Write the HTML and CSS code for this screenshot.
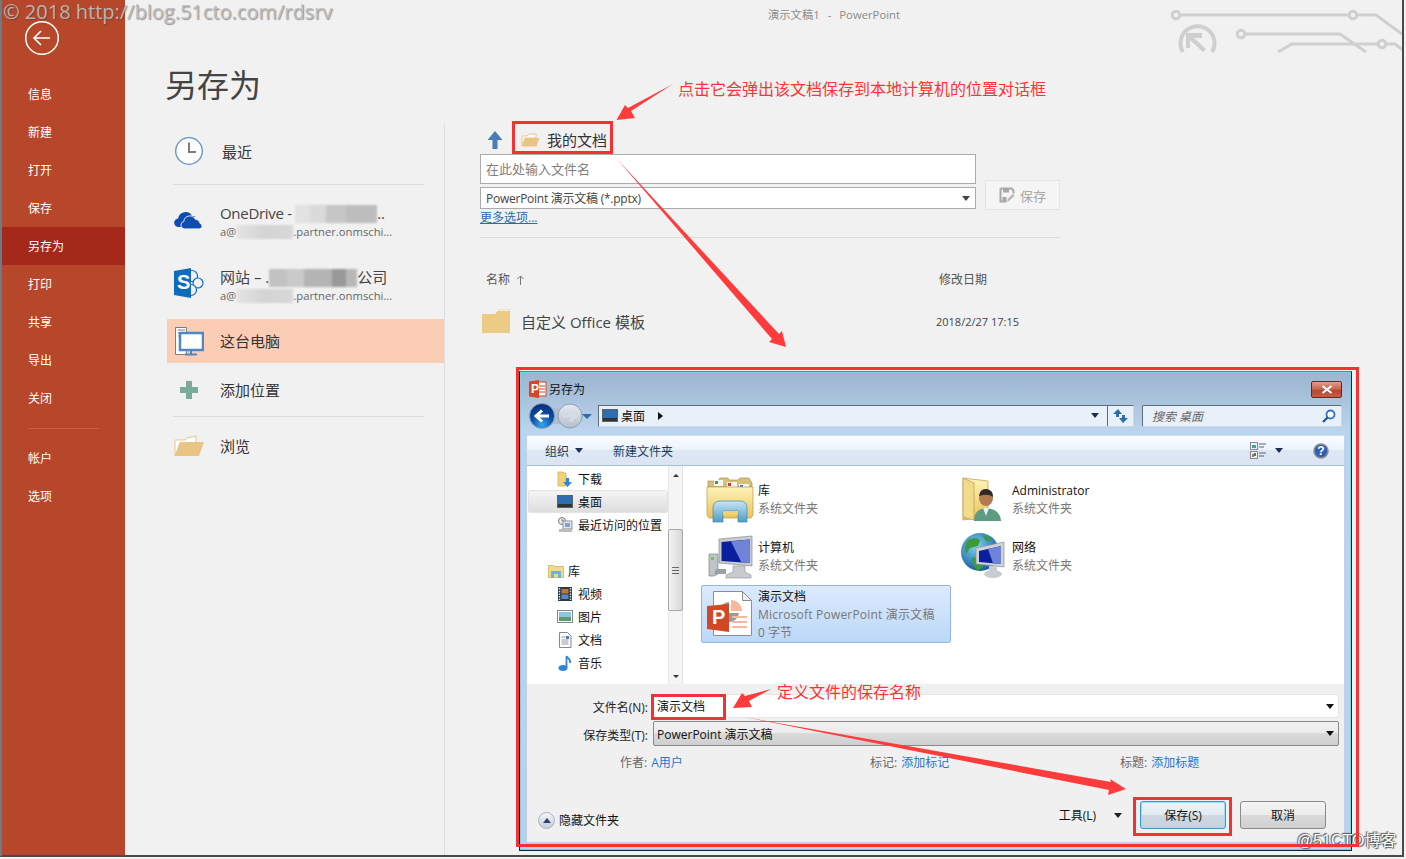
FILE: index.html
```html
<!DOCTYPE html>
<html lang="zh-CN">
<head>
<meta charset="utf-8">
<title>另存为</title>
<link rel="stylesheet" href="styles.css">
</head>
<body>
<div class="window">
  <aside class="sidebar">
    <div class="back-wrap">
      <svg class="back-icon" width="36" height="36" viewBox="0 0 36 36"><circle cx="18" cy="18" r="16.3" fill="none" stroke="#fff" stroke-width="1.5"/><path d="M26 18H10M17 11l-7 7 7 7" fill="none" stroke="#fff" stroke-width="1.6"/></svg>
    </div>
    <nav class="side-nav">
      <a class="side-item">信息</a>
      <a class="side-item">新建</a>
      <a class="side-item">打开</a>
      <a class="side-item">保存</a>
      <a class="side-item side-active">另存为</a>
      <a class="side-item">打印</a>
      <a class="side-item">共享</a>
      <a class="side-item">导出</a>
      <a class="side-item">关闭</a>
      <div class="side-sep"></div>
      <a class="side-item">帐户</a>
      <a class="side-item">选项</a>
    </nav>
  </aside>

  <main class="main">
    <div class="doc-title"><span>演示文稿1</span><span class="doc-dash">-</span><span>PowerPoint</span></div>
    <h1 class="heading">另存为</h1>
    <div class="panes">
      <section class="places">
        <div class="place place-recent">
          <span class="place-icon"><svg width="30" height="30" viewBox="0 0 30 30"><circle cx="15" cy="15" r="13.3" fill="#fff" stroke="#5b8fc9" stroke-width="1.3"/><path d="M15 6.5V16h7" fill="none" stroke="#7d7d7d" stroke-width="2"/></svg></span>
          <span class="place-name place-name-recent">最近</span>
        </div>
        <div class="place-sep"></div>
        <div class="place place-tall">
          <span class="place-icon"><svg class="icon-cloud" width="30" height="21" viewBox="0 0 32 22"><path d="M5 19a4.5 4.5 0 0 1-.6-9 8 8 0 0 1 15-2.600A6 6 0 0 1 23 7.500L12 12.500 8 19z" fill="#0f4cb0"/><path d="M11 21a4 4 0 0 1-.5-7.900 6.500 6.500 0 0 1 12.300-2.300 5 5 0 0 1 4.900 4.300A3 3 0 0 1 27 21z" fill="#0f4cb0" stroke="#f1f1f1" stroke-width="1"/></svg></span>
          <div class="place-lines">
            <div class="place-title place-title-latin">OneDrive - <span class="redact redact-od"></span>..</div>
            <div class="place-sub">a@<span class="redact redact-mail"></span>.partner.onmschi...</div>
          </div>
        </div>
        <div class="place place-tall">
          <span class="place-icon"><svg class="icon-site" width="32" height="32" viewBox="0 0 32 32"><circle cx="19" cy="9" r="5.500" fill="#f1f1f1" stroke="#0f6cbd" stroke-width="1.200"/><circle cx="25" cy="16" r="5" fill="#f1f1f1" stroke="#0f6cbd" stroke-width="1.200"/><circle cx="18" cy="23" r="5.500" fill="#f1f1f1" stroke="#0f6cbd" stroke-width="1.200"/><path d="M1 4 18 1v30L1 28z" fill="#0f6cbd"/><text class="svg-s" x="4" y="22">S</text></svg></span>
          <div class="place-lines">
            <div class="place-title">网站 – .<span class="redact redact-site"></span>公司</div>
            <div class="place-sub">a@<span class="redact redact-mail"></span>.partner.onmschi...</div>
          </div>
        </div>
        <div class="place place-active place-up">
          <span class="place-icon"><svg width="30" height="30" viewBox="0 0 30 30"><path d="M1.500 1.500h11v27h-11z" fill="#fff" stroke="#7d7d7d"/><path d="M4 4h7M4 7h7M4 10h7" stroke="#7d7d7d"/><rect x="6" y="7" width="23" height="17" fill="#fff" stroke="#4f86c6" stroke-width="2.500"/><path d="M17 25v3M11 28.500h12" stroke="#4f86c6" stroke-width="2"/></svg></span>
          <span class="place-name">这台电脑</span>
        </div>
        <div class="place place-add place-up">
          <span class="place-icon"><svg width="20" height="20" viewBox="0 0 20 20"><path d="M7 1h6v6h6v6h-6v6H7v-6H1V7h6z" fill="#7aaa98"/></svg></span>
          <span class="place-name">添加位置</span>
        </div>
        <div class="place-sep place-sep-low"></div>
        <div class="place place-browse place-up">
          <span class="place-icon"><svg width="30" height="22" viewBox="0 0 30 22"><path d="M1 21V5h10l2-2 9-2v7H6z" fill="#fff" stroke="#e9c585"/><path d="M1 21 6 7h24l-5 14z" fill="#e9c585"/></svg></span>
          <span class="place-name">浏览</span>
        </div>
      </section>

      <section class="saver">
        <div class="crumb">
          <svg class="crumb-up" width="16" height="20" viewBox="0 0 16 20"><path d="M8 1 15.500 10H10.500v9H5.500v-9H.5z" fill="#4a7db5"/></svg>
          <svg class="crumb-folder" width="19" height="14" viewBox="0 0 19 14"><path d="M1 13V3h5l2-2h7v4H4z" fill="#fff" stroke="#e9c585"/><path d="M1 13.500 4 5h14.500l-3 8.500z" fill="#e9c585"/></svg>
          <span class="crumb-text">我的文档</span>
        </div>
        <div class="save-form">
          <div class="field-name">在此处输入文件名</div>
          <div class="field-type"><span class="field-type-text">PowerPoint 演示文稿 (*.pptx)</span><i class="caret caret-gray"></i></div>
          <div class="save-btn">
            <svg width="16" height="16" viewBox="0 0 16 16"><path d="M1.500 1.500h11l2 2v3M1.500 1.500v13h6" fill="none" stroke="#a8a8a8" stroke-width="2"/><rect x="4" y="2" width="6" height="3.500" fill="#a8a8a8"/><rect x="3.500" y="10" width="4" height="4.500" fill="#a8a8a8"/><path d="M8 15l1-3.500 5-4.500 1.500 2-5 4.500z" fill="#b8b8b8"/></svg>
            <span>保存</span>
          </div>
          <a class="more-link">更多选项...</a>
        </div>
        <div class="saver-sep"></div>
        <div class="list-head">
          <span class="col-name">名称<svg class="sort-up" width="7" height="10" viewBox="0 0 7 10"><path d="M3.500 10V1M.5 4l3-3 3 3" fill="none" stroke="#777"/></svg></span>
          <span class="col-date">修改日期</span>
        </div>
        <div class="list-row">
          <span class="file-name"><svg width="28" height="24" viewBox="0 0 28 24"><path d="M14 4l4-3h9v4z" fill="#fff" stroke="#eccb84" stroke-width=".7"/><path d="M0 5h13l3-3h12v22H0z" fill="#eccb84"/></svg>自定义 Office 模板</span>
          <span class="file-date">2018/2/27 17:15</span>
        </div>
      </section>
    </div>
    <svg class="circuit" width="236" height="54" viewBox="0 0 236 54">
      <g fill="none" stroke="#cfcfcf" stroke-width="3">
        <circle cx="10" cy="15" r="3.800"/><path d="M14 15H183M191 15h19l26 19"/><circle cx="187" cy="15" r="3.800"/>
        <circle cx="75" cy="34" r="3.800"/><path d="M79 34h95l26 18"/>
        <path d="M112 52l14-8H212M220 44h9l8 6"/><circle cx="216" cy="44" r="3.800"/>
        <path d="M17 52A17 17 0 1 1 46 52" stroke-width="4"/>
      </g>
      <path d="M20 33h16v5h-8l12 11-3 3-13-12v8h-4z" fill="#cfcfcf"/>
    </svg>
  </main>
</div>

<section class="dialog">
  <header class="dlg-title">
    <svg class="dlg-app" width="18" height="18" viewBox="0 0 18 18"><rect x="8" y="2" width="9" height="14" fill="#fff" stroke="#d24726"/><path d="M10 6h6M10 9h6M10 12h6" stroke="#d24726"/><path d="M0 1.500 10 0v18L0 16.500z" fill="#d24726"/><text class="svg-p" x="2" y="13">P</text></svg>
    <span class="dlg-title-text">另存为</span>
    <span class="dlg-close"><svg width="12" height="9" viewBox="0 0 12 9"><path d="M1.500 1l9 7M10.500 1l-9 7" stroke="#fff" stroke-width="2.200"/></svg></span>
  </header>
  <div class="dlg-nav">
    <svg class="nav-arrows" width="68" height="28" viewBox="0 0 68 28">
      <defs>
        <radialGradient id="backBlue" cx=".5" cy=".85" r=".8"><stop offset="0" stop-color="#35a7f0"/><stop offset=".55" stop-color="#0c4fa6"/><stop offset="1" stop-color="#0a2e78"/></radialGradient>
        <linearGradient id="fwdGray" x1="0" y1="0" x2="0" y2="1"><stop offset="0" stop-color="#e6ebf2"/><stop offset="1" stop-color="#b4bfcc"/></linearGradient>
      </defs>
      <rect x="14" y="6" width="40" height="16" rx="8" fill="#a9bdd3"/>
      <circle cx="13" cy="14" r="12.500" fill="url(#backBlue)" stroke="#8aa2bd"/>
      <path d="M20 14H8M13 8.500 7 14l6 5.500" fill="none" stroke="#fff" stroke-width="3"/>
      <circle cx="41" cy="14" r="12" fill="url(#fwdGray)" stroke="#8fa0b3"/>
      <path d="M34 14h12M41 9l5.500 5-5.500 5" fill="none" stroke="#d5dce4" stroke-width="3"/>
      <path d="M53 12h10l-5 5z" fill="#2d6fae"/>
    </svg>
    <div class="crumbbar">
      <svg width="16" height="13" viewBox="0 0 16 13"><rect x=".5" y=".5" width="15" height="12" fill="#2f6db3" stroke="#566"/><rect x="1" y="9" width="14" height="3" fill="#333"/></svg>
      <span class="crumbbar-text">桌面</span>
      <i class="caret-right"></i>
      <i class="caret caret-navy caret-push"></i>
      <span class="refresh"><svg width="15" height="14" viewBox="0 0 15 14"><path d="M5 0 0 5h3v3h3V5h3z" fill="#2d6fae"/><path d="M10 14l5-5h-3V6H9v3H6z" fill="#2d6fae"/></svg></span>
    </div>
    <div class="searchbar">
      <span>搜索 桌面</span>
      <svg width="14" height="14" viewBox="0 0 14 14"><circle cx="8.500" cy="5.500" r="4" fill="#fff" stroke="#2d74c4" stroke-width="1.800"/><path d="M5.500 8.500 1 13" stroke="#1d4f94" stroke-width="2.200"/></svg>
    </div>
  </div>
  <div class="dlg-toolbar">
    <span class="tool">组织<i class="caret caret-navy"></i></span>
    <span class="tool tool-new">新建文件夹</span>
    <svg class="tool-view" width="17" height="17" viewBox="0 0 17 17"><rect x=".5" y=".5" width="7" height="7" fill="#eef" stroke="#889"/><rect x=".5" y="9.500" width="7" height="7" fill="#eef" stroke="#889"/><rect x="2" y="3" width="4" height="3" fill="#3a8"/><rect x="2" y="12" width="2" height="3" fill="#c63"/><rect x="4" y="11" width="2" height="3" fill="#483"/><path d="M9 2h7M9 5h5M9 11h7M9 14h5" stroke="#566"/></svg>
    <i class="caret caret-navy caret-view"></i>
    <svg class="tool-help" width="16" height="16" viewBox="0 0 16 16"><circle cx="8" cy="8" r="7" fill="#2f5fb5" stroke="#8a8f98" stroke-width="1.500"/><text class="svg-help" x="8" y="12">?</text></svg>
  </div>
  <div class="dlg-main">
    <div class="tree">
      <div class="tree-item"><svg width="16" height="16" viewBox="0 0 16 16"><path d="M1 1h5l1 1h2v13H1z" fill="#f1d27a" stroke="#c9a94f" stroke-width=".7"/><path d="M9 7h3v4h3l-4.500 5L6 11h3z" fill="#2f86d8"/></svg>下载</div>
      <div class="tree-item tree-current"><svg width="16" height="13" viewBox="0 0 16 13"><rect x=".5" y=".5" width="15" height="12" fill="#2f6db3" stroke="#566"/><rect x="1" y="9" width="14" height="3" fill="#333"/></svg>桌面</div>
      <div class="tree-item"><svg width="16" height="16" viewBox="0 0 16 16"><circle cx="5" cy="4" r="3.500" fill="#eee" stroke="#777"/><path d="M5 2v2h2" fill="none" stroke="#555" stroke-width=".7"/><rect x="6" y="4" width="9" height="8" fill="#dfe6ee" stroke="#8a8f98"/><rect x="8" y="6" width="5" height="4" fill="#7aa5cf"/><rect x="2" y="12" width="13" height="3" fill="#bbb"/></svg>最近访问的位置</div>
      <div class="tree-item tree-lib"><svg width="16" height="14" viewBox="0 0 16 14"><path d="M.5 1.500h5l1 1h9v11H.5z" fill="#f3d98a" stroke="#c9a94f" stroke-width=".7"/><path d="M3 14V7h10v7h-3v-4H6v4z" fill="#6fb2d6"/></svg>库</div>
      <div class="tree-item"><svg width="16" height="16" viewBox="0 0 16 16"><rect x="1" y="1" width="14" height="14" fill="#2b3b46"/><rect x="4.500" y="3" width="7" height="4.500" fill="#c0763d"/><rect x="4.500" y="8.500" width="7" height="4.500" fill="#5b8ab8"/><path d="M2.500 2v12M13.500 2v12" stroke="#dfe6ee" stroke-width="1.300" stroke-dasharray="1.500 1.200"/></svg>视频</div>
      <div class="tree-item"><svg width="16" height="13" viewBox="0 0 16 13"><rect x=".5" y=".5" width="15" height="12" fill="#fff" stroke="#808890"/><rect x="2" y="2" width="12" height="5" fill="#8fc4e2"/><rect x="2" y="7" width="12" height="4" fill="#5e9b6b"/></svg>图片</div>
      <div class="tree-item"><svg width="14" height="16" viewBox="0 0 14 16"><path d="M1.500.5h8l3.500 3.500v11.500H1.500z" fill="#fff" stroke="#808890"/><path d="M3.500 5h4M3.500 8h7M3.500 10h7M3.500 12h7" stroke="#8c9aaa"/><rect x="8" y="4" width="3" height="3" fill="#4a7db5"/></svg>文档</div>
      <div class="tree-item"><svg width="14" height="16" viewBox="0 0 14 16"><ellipse cx="5" cy="13" rx="4.500" ry="3" fill="#2f86d8"/><path d="M8.500 13V1c1 2.500 4.500 3 3.500 7" fill="none" stroke="#2f86d8" stroke-width="1.800"/></svg>音乐</div>
    </div>
    <div class="scroll">
      <i class="scroll-up"></i>
      <div class="scroll-thumb"><span class="scroll-grip"></span></div>
      <i class="scroll-down"></i>
    </div>
    <div class="files">
      <div class="file">
        <svg class="file-icon" width="48" height="48" viewBox="0 0 48 48">
          <defs><linearGradient id="yellowFolder" x1="0" y1="0" x2="0" y2="1"><stop offset="0" stop-color="#fff3b8"/><stop offset="1" stop-color="#e9c45a"/></linearGradient>
          <linearGradient id="libBlue" x1="0" y1="0" x2="0" y2="1"><stop offset="0" stop-color="#c8e6f4"/><stop offset="1" stop-color="#4f9cc4"/></linearGradient></defs>
          <path d="M2 6h10l2-3h8l1 2h9l2-2h9l3 5v4H2z" fill="#d9c07a" stroke="#a99350" stroke-width=".7"/>
          <rect x="8" y="5" width="9" height="6" fill="#f4f4f0"/><rect x="9" y="6" width="3" height="3" fill="#3ca34a"/><rect x="21" y="7" width="10" height="6" fill="#f4f4f0"/><rect x="22" y="8" width="3" height="3" fill="#c8452c"/><rect x="33" y="9" width="10" height="5" fill="#f4f4f0"/><rect x="34" y="10" width="3" height="3" fill="#2f86d8"/>
          <path d="M1 12h46v28l-2 3H3l-2-3z" fill="url(#yellowFolder)" stroke="#b99a46" stroke-width=".7"/>
          <path d="M7 47V33q0-7 7-7h20q7 0 7 7v14h-9V36H17v11z" fill="url(#libBlue)" stroke="#3d86ad" stroke-width=".7"/>
          <rect x="17" y="36" width="15" height="4" fill="#f0d26f"/>
        </svg>
        <div class="file-text"><div class="file-title">库</div><div class="file-sub">系统文件夹</div></div>
      </div>
      <div class="file">
        <svg class="file-icon" width="48" height="48" viewBox="0 0 48 48">
          <path d="M3 22h9v20l-4 2H3z" fill="#bfc4c8" stroke="#7f8589" stroke-width=".7"/><rect x="5" y="25" width="3" height="3" fill="#7ac143"/>
          <path d="M13 7 46 4v30l-33-3z" fill="#c8ccd0" stroke="#868b90" stroke-width=".7"/>
          <path d="M15.500 10 43.500 7.500v23.500l-28-2z" fill="#0a1f9e"/>
          <path d="M25 9.500 43.500 7.500v23.500l-8-.6z" fill="#6f83d8"/>
          <path d="M27 34h12v6l6 3v3H20v-3l7-3z" fill="#c7cbce" stroke="#9a9fa3" stroke-width=".7"/>
          <path d="M10 37h10v5H8z" fill="#9aa0a4"/>
        </svg>
        <div class="file-text"><div class="file-title">计算机</div><div class="file-sub">系统文件夹</div></div>
      </div>
      <div class="file file-selected">
        <svg class="file-icon file-icon-ppt" width="48" height="48" viewBox="0 0 48 48">
          <path d="M7.500 1.500h29l9 9v35h-38z" fill="#fff" stroke="#8e8e8e"/>
          <path d="M36.500 1.500v9h9z" fill="#eee" stroke="#8e8e8e"/>
          <path d="M25 10a11 11 0 0 1 11 11H25z" fill="#f6b9a0"/>
          <path d="M23 12a10 10 0 1 0 10 11H23z" fill="#9a9a9a"/>
          <path d="M26 27h15M26 32h15M26 37h15" stroke="#f6b9a0" stroke-width="2.200"/>
          <path d="M1 16 23 14v28L1 39z" fill="#d24726"/>
          <text class="svg-ppt" x="6" y="34">P</text>
        </svg>
        <div class="file-text"><div class="file-title">演示文档</div><div class="file-sub file-sub-wide">Microsoft PowerPoint 演示文稿</div><div class="file-sub">0 字节</div></div>
      </div>
      <div class="file file-col2 file-row1">
        <svg class="file-icon" width="48" height="48" viewBox="0 0 48 48">
          <path d="M3 3 28 6v36L3 45z" fill="url(#yellowFolder)" stroke="#b99a46" stroke-width=".7"/>
          <path d="M3 3l11 5v37l-11-3z" fill="#f3db8c" stroke="#b99a46" stroke-width=".7"/>
          <ellipse cx="26" cy="23" rx="7" ry="8" fill="#b47a50"/>
          <path d="M19 21q1-8 8-7 6 1 6 8-5-4-14-1z" fill="#2d2a28"/>
          <path d="M14 46q0-12 12-13 14 1 15 13z" fill="#5d9c82"/>
          <path d="M23 33h6l-3 8z" fill="#e8f2ec"/>
        </svg>
        <div class="file-text"><div class="file-title">Administrator</div><div class="file-sub">系统文件夹</div></div>
      </div>
      <div class="file file-col2 file-row2">
        <svg class="file-icon" width="48" height="48" viewBox="0 0 48 48">
          <defs><radialGradient id="globe" cx=".4" cy=".35" r=".7"><stop offset="0" stop-color="#7fd3ee"/><stop offset="1" stop-color="#10589c"/></radialGradient></defs>
          <circle cx="20" cy="20" r="19" fill="url(#globe)"/>
          <path d="M8 8q8-4 12 0l-2 6-8 2-4 6q-3-8 2-14zM12 25l8 2 3 8-5 4q-6-5-6-14zM22 3l10 3-5 4z" fill="#3a9a3c"/>
          <path d="M16 16 44 10v25l-28-3z" fill="#cfd3d6" stroke="#8a8f93" stroke-width=".7"/>
          <path d="M19 19 41 14v18l-22-2z" fill="#0a1f9e"/>
          <path d="M28 17 41 14v18l-8-.7z" fill="#6f83d8"/>
          <ellipse cx="33" cy="42" rx="9" ry="4" fill="#c9cdd0"/><rect x="29" y="34" width="8" height="6" fill="#c9cdd0"/>
        </svg>
        <div class="file-text"><div class="file-title">网络</div><div class="file-sub">系统文件夹</div></div>
      </div>
    </div>
  </div>
  <div class="dlg-footer">
    <div class="form-row">
      <label class="form-label">文件名(N):</label>
      <div class="combo combo-name"><span>演示文档</span><i class="caret caret-black"></i></div>
    </div>
    <div class="form-row form-row-type">
      <label class="form-label">保存类型(T):</label>
      <div class="combo combo-type"><span>PowerPoint 演示文稿</span><i class="caret caret-black"></i></div>
    </div>
    <div class="meta">
      <span class="meta-cell"><span class="meta-key">作者:</span><a class="meta-val">A用户</a></span>
      <span class="meta-cell"><span class="meta-key">标记:</span><a class="meta-val">添加标记</a></span>
      <span class="meta-cell"><span class="meta-key">标题:</span><a class="meta-val">添加标题</a></span>
    </div>
    <div class="actions">
      <span class="hide-folders"><i class="hide-circle"><i class="hide-tri"></i></i>隐藏文件夹</span>
      <span class="tools-label">工具(L)</span>
      <i class="caret caret-dark tools-caret"></i>
      <button class="btn btn-primary">保存(S)</button>
      <button class="btn">取消</button>
    </div>
  </div>
</section>

<div class="wm-top">© 2018 http://blog.51cto.com/rdsrv</div>
<div class="wm-bottom">@51CTO博客</div>
<div class="note note-top">点击它会弹出该文档保存到本地计算机的位置对话框</div>
<div class="note note-name">定义文件的保存名称</div>
<div class="mark mark-crumb"></div>
<div class="mark mark-dialog"></div>
<div class="mark mark-name"></div>
<div class="mark mark-save"></div>
<svg class="arrows" width="1406" height="859" viewBox="0 0 1406 859">
  <polygon points="673,84 631,111 635,118 616.500,120 625,105 628,108"/>
  <polygon points="617,159 779,334 782,331 786,347 769,342 772,339"/>
  <polygon points="771,689 749,701 752,707 733,708 742,693 745,696"/>
  <polygon points="744,717 1111,782 1110,779 1126,789 1108,795 1109,790"/>
</svg>
</body>
</html>
```
FILE: styles.css
```css
* { box-sizing: border-box; }
html, body { margin: 0; padding: 0; }
body {
  width: 1406px;
  height: 859px;
  position: relative;
  overflow: hidden;
  background: #f3f3f3;
  font-family: "Open Sans", "Noto Sans CJK SC", sans-serif;
  font-size: 12px;
  color: #333;
}
svg { display: block; flex: none; }
i { display: block; font-style: normal; }
a { color: inherit; }

.window {
  width: 1404px;
  height: 857px;
  display: flex;
  background: #f1f1f1;
  border-left: 2px solid #6e7b87;
  border-right: 2px solid #4a4a4a;
  border-bottom: 2px solid #4a4a4a;
}

/* sidebar */
.sidebar { width: 123px; flex: none; background: #b7472a; color: #fff; }
.back-wrap { height: 75px; padding: 20px 0 0 22px; }
.side-nav { display: flex; flex-direction: column; }
.side-item { height: 38px; line-height: 40px; padding-left: 26px; font-size: 12px; color: #fff; }
.side-active { background: #a4291a; }
.side-sep { width: 71px; height: 1px; margin: 11px 0 10px 26px; background: #d8573a; flex: none; }

/* main */
.main { flex: 1; min-width: 0; position: relative; }
.doc-title { height: 30px; line-height: 30px; padding-left: 643px; font-size: 11.300px; color: #8a8a8a; display: flex; }
.doc-dash { margin: 0 8px; }
.heading { margin: 33px 0 0 40px; height: 44px; line-height: 44px; font-size: 32px; font-weight: 400; color: #444; }
.panes { margin: 17px 0 0 42px; display: flex; height: 731px; }
.circuit { position: absolute; top: 0; right: 0; }

/* places */
.places { width: 278px; flex: none; border-right: 1px solid #dedede; }
.place { display: flex; align-items: center; gap: 9px; font-size: 15px; color: #333; }
.place-icon { width: 44px; flex: none; display: flex; justify-content: center; }
.icon-cloud { margin-top: -5px; }
.icon-site { margin-top: -6px; }
.place-recent { height: 54px; }
.place-name-recent { margin-left: 2px; }
.place-up .place-name { margin-top: -2px; }
.place-sep { height: 1px; margin: 6px 20px 0 6px; background: #dcdcdc; }
.place-tall { height: 64px; }
.place-sep + .place-tall { margin-top: 5px; }
.place-active { height: 44px; margin-top: 1px; background: #fccdb5; }
.place-add { height: 44px; margin-top: 5px; }
.place-sep-low { margin-top: 4px; }
.place-browse { height: 44px; margin-top: 7px; }
.place-lines { min-width: 0; white-space: nowrap; }
.place-title { font-size: 15px; line-height: 18px; color: #444; }
.place-title-latin { letter-spacing: -.3px; }
.place-sub { font-size: 11.250px; line-height: 18px; color: #666; }
.redact { display: inline-block; height: 18px; vertical-align: -4px; filter: blur(1px); }
.redact-od { width: 82px; background: linear-gradient(90deg, #e2e2e2 0 18%, #dadada 18% 38%, #c6c6c6 38% 62%, #bdbdbd 62% 100%); }
.redact-mail { width: 57px; height: 14px; vertical-align: -3px; background: linear-gradient(90deg, #e4e4e4, #d4d4d4 50%, #d8d8d8); }
.redact-site { width: 88px; background: linear-gradient(90deg, #c2c2c2 0 20%, #cacaca 20% 40%, #b4b4b4 40% 72%, #999 72% 88%, #b8b8b8 88% 100%); }
.svg-s { font: 700 20px "Liberation Sans", sans-serif; fill: #fff; }
.svg-p { font: 700 12px "Liberation Sans", sans-serif; fill: #fff; }
.svg-ppt { font: 700 20px "Liberation Sans", sans-serif; fill: #fff; }
.svg-help { font: 700 12px "Liberation Sans", sans-serif; fill: #fff; text-anchor: middle; }

/* saver */
.saver { width: 580px; flex: none; margin-left: 35px; }
.crumb { height: 30px; padding: 1px 0 0 7px; display: flex; align-items: center; }
.crumb-folder { margin-left: 18px; }
.crumb-text { margin-left: 7px; font-size: 15px; color: #333; }
.save-form { display: grid; grid-template-columns: 496px 75px; column-gap: 9px; row-gap: 3px; grid-template-rows: 30px 22px; }
.field-name { height: 30px; line-height: 28px; padding-left: 5px; background: #fff; border: 1px solid #ababab; color: #808080; font-size: 13px; }
.field-type { height: 22px; padding: 0 5px; display: flex; align-items: center; justify-content: space-between; background: #fff; border: 1px solid #ababab; color: #444; font-size: 12px; }
.field-type-text { letter-spacing: -.25px; }
.save-btn { grid-column: 2; grid-row: 1 / 3; align-self: end; height: 30px; margin-bottom: -1px; display: flex; align-items: center; justify-content: center; gap: 5px; background: #f5f5f5; border: 1px solid #e4e4e4; color: #a8a8a8; font-size: 13px; }
.more-link { grid-column: 1; height: 14px; line-height: 14px; margin-top: -1px; color: #2a6ab0; text-decoration: underline; font-size: 12px; }
.saver-sep { height: 1px; margin-top: 12px; background: #dcdcdc; }
.list-head { margin-top: 32px; height: 20px; line-height: 20px; display: grid; grid-template-columns: 459px 1fr; color: #555; font-size: 12px; }
.col-name { padding-left: 6px; display: flex; align-items: center; gap: 7px; }
.list-row { margin-top: 19px; height: 24px; display: grid; grid-template-columns: 456px 1fr; align-items: center; }
.file-name { display: flex; align-items: center; gap: 11px; padding-left: 2px; font-size: 15px; color: #444; }
.file-date { font-size: 11px; color: #444; }

/* carets */
.caret { width: 0; height: 0; border-left: 4px solid transparent; border-right: 4px solid transparent; border-top: 5px solid #333; flex: none; }
.caret-gray { border-top-color: #444; }
.caret-navy { border-top-color: #1e2f55; }
.caret-black { border-top-color: #111; }
.caret-dark { border-top-color: #222; }
.caret-right { width: 0; height: 0; border-top: 4px solid transparent; border-bottom: 4px solid transparent; border-left: 5px solid #111; margin-left: 13px; flex: none; }

/* dialog window */
.dialog {
  position: absolute;
  left: 519px;
  top: 371px;
  width: 833px;
  height: 480px;
  display: flex;
  flex-direction: column;
  padding: 0 7px;
  border: 1px solid #14212e;
  border-top-color: #6b8196;
  box-shadow: inset 0 0 0 1px #7cd0e8;
  background: linear-gradient(180deg, #9bb4cf 0, #bbd3ec 58px, #b9d1ea 100%);
  color: #111;
}
.dlg-title { height: 33px; flex: none; display: flex; align-items: flex-start; padding: 8px 0 0 2px; }
.dlg-title-text { margin-left: 2px; line-height: 20px; font-size: 12px; }
.dlg-close { margin: 1px 2px 0 auto; width: 31px; height: 17px; display: flex; align-items: center; justify-content: center; border: 1px solid #5e2a26; border-radius: 2px; background: linear-gradient(180deg, #e0a08c 0, #c85d46 50%, #b8452f 55%, #c65c45 100%); }

.dlg-nav { height: 21px; flex: none; display: flex; align-items: center; padding-left: 2px; }
.nav-arrows { margin-right: 1px; }
.crumbbar { width: 536px; height: 22px; display: flex; align-items: center; padding-left: 3px; background: #e8f0f9; border: 1px solid #5e6b78; border-bottom-color: #c9d7e6; border-right-color: #c9d7e6; }
.crumbbar-text { margin-left: 3px; font-size: 12px; }
.caret-push { margin-left: auto; margin-right: 8px; }
.refresh { width: 26px; height: 20px; display: flex; align-items: center; justify-content: center; border-left: 1px solid #5e6b78; }
.searchbar { width: 200px; height: 22px; margin-left: 8px; display: flex; align-items: center; justify-content: space-between; padding: 0 5px 0 9px; background: #e8f0f9; border: 1px solid #5e6b78; border-bottom-color: #c9d7e6; border-right-color: #c9d7e6; border-radius: 2px; color: #666; font-style: italic; font-size: 12px; }

.dlg-toolbar { height: 31px; margin-top: 9px; flex: none; display: flex; align-items: center; padding-left: 18px; border-top: 1px solid #d3e0ee; border-bottom: 1px solid #a9bdd3; background: linear-gradient(180deg, #fbfdff 0, #eaf2fb 48%, #dde7f4 50%, #dbe5f3 100%); color: #1e3c5a; font-size: 12px; }
.tool { display: flex; align-items: center; gap: 6px; }
.tool-new { margin-left: 30px; }
.tool-view { margin-left: auto; }
.caret-view { margin-left: 8px; }
.tool-help { margin: 0 15px 0 30px; }

.dlg-main { height: 218px; flex: none; display: grid; grid-template-columns: 141px 15px 1fr; background: #fff; }
.tree { padding-top: 1px; }
.tree-item { height: 23px; display: flex; align-items: center; gap: 5px; padding-left: 30px; font-size: 12px; color: #111; white-space: nowrap; }
.tree-item svg { width: 16px; }
.tree-current { margin: 0 0 0 1px; padding-left: 28px; border-radius: 2px; border: 1px solid #e3e3e3; background: linear-gradient(180deg, #f4f4f4, #dedede); }
.tree-lib { margin-top: 23px; padding-left: 21px; gap: 4px; }
.scroll { display: flex; flex-direction: column; align-items: center; background: #f5f5f5; border-left: 1px solid #e8e8e8; border-right: 1px solid #e2e2e2; }
.scroll-up, .scroll-down { width: 0; height: 0; border-left: 3px solid transparent; border-right: 3px solid transparent; }
.scroll-up { margin-top: 8px; border-bottom: 3px solid #333; }
.scroll-down { margin-top: auto; margin-bottom: 6px; border-top: 3px solid #333; }
.scroll-thumb { width: 15px; height: 82px; margin-top: 52px; display: flex; align-items: center; justify-content: center; background: linear-gradient(90deg, #f2f2f2, #d8d8d8); border: 1px solid #a8a8a8; border-radius: 2px; }
.scroll-grip { width: 7px; height: 7px; border-top: 1px solid #666; border-bottom: 1px solid #666; background: linear-gradient(#666, #666) center / 100% 1px no-repeat; }
.files { padding: 5px 0 0 18px; display: grid; grid-template-columns: 250px 250px; column-gap: 4px; grid-template-rows: 56px 58px 58px; }
.file { display: flex; align-items: center; gap: 4px; padding-left: 4px; border: 1px solid transparent; }
.file-col2 { grid-column: 2; }
.file-row1 { grid-row: 1; }
.file-row2 { grid-row: 2; }
.file-selected { background: linear-gradient(180deg, #dceafc, #bcd8f8); border-color: #93b6dc; border-radius: 2px; }
.file-text { min-width: 0; padding-top: 2px; white-space: nowrap; }
.file-title { font-size: 12px; line-height: 18px; color: #111; }
.file-sub { font-size: 12px; line-height: 18px; color: #777; }
.file-sub-wide { letter-spacing: .2px; }

.dlg-footer { height: 158px; flex: none; background: #f0f0f0; padding: 10px 5px 0 0; }
.form-row { display: flex; align-items: center; height: 24px; }
.form-row-type { height: 25px; margin-top: 3px; }
.form-label { width: 121px; flex: none; padding-top: 2px; text-align: right; margin-right: 5px; font-size: 12px; color: #222; }
.combo { flex: 1; height: 100%; display: flex; align-items: center; justify-content: space-between; padding: 0 4px 0 3px; font-size: 12px; color: #111; border-radius: 2px; }
.combo-name { background: #fff; border: 1px solid #e6e6e6; }
.combo-type { background: linear-gradient(180deg, #f2f2f2 0, #ebebeb 48%, #dadada 50%, #cfcfcf 100%); border: 1px solid #8a8a8a; }
.meta { margin: 9px 0 0 93px; height: 16px; line-height: 16px; display: grid; grid-template-columns: 250px 250px 1fr; }
.meta-cell { display: flex; gap: 4px; }
.meta-key { color: #666; }
.meta-val { color: #2a72d0; }
.actions { margin-top: 30px; height: 28px; display: flex; align-items: center; padding-right: 13px; }
.hide-folders { display: flex; align-items: center; gap: 4px; margin-top: 10px; padding-left: 11px; font-size: 12px; color: #111; }
.hide-circle { width: 17px; height: 17px; border-radius: 50%; border: 1px solid #a8b2bf; background: linear-gradient(180deg, #f4f6f9, #c4cdd8); display: flex; align-items: center; justify-content: center; }
.hide-tri { width: 0; height: 0; border-left: 4px solid transparent; border-right: 4px solid transparent; border-bottom: 5px solid #24427a; }
.tools-label { margin-left: auto; font-size: 12px; color: #111; }
.tools-caret { margin: 0 18px; }
.btn { width: 86px; height: 28px; padding: 0; font-family: inherit; font-size: 12px; color: #111; border: 1px solid #8a8a8a; border-radius: 3px; background: linear-gradient(180deg, #f4f4f4 0, #ebebeb 48%, #dbdbdb 50%, #cfcfcf 100%); }
.btn-primary { margin-right: 14px; border: 1px solid #3a97cf; box-shadow: inset 0 0 0 1px #9fdcf4; background: linear-gradient(180deg, #eef5fa 0, #e0eaf1 48%, #cdd8e1 50%, #c6d2dc 100%); }

/* overlays */
.wm-top { position: absolute; left: 3px; top: 0; font: 20px/24px "Open Sans", sans-serif; color: rgba(190, 190, 190, .92); text-shadow: 1px 1px 1px rgba(70, 70, 70, .55); white-space: nowrap; }
.wm-bottom { position: absolute; left: 1297px; top: 831px; font: 16px/20px "Liberation Sans", "Noto Sans CJK SC", sans-serif; color: #fff; text-shadow: 0 0 1px #555, 1px 1px 1px #555, -1px -1px 1px #555; white-space: nowrap; }
.note { position: absolute; font-size: 16px; line-height: 20px; color: #ff3333; white-space: nowrap; }
.note-top { left: 678px; top: 79px; }
.note-name { left: 777px; top: 682px; }
.mark { position: absolute; border: 3px solid #f33333; }
.mark-crumb { left: 512px; top: 121px; width: 101px; height: 33px; }
.mark-dialog { left: 516px; top: 367px; width: 843px; height: 480px; }
.mark-name { left: 651px; top: 694px; width: 75px; height: 26px; }
.mark-save { left: 1133px; top: 797px; width: 99px; height: 39px; }
.arrows { position: absolute; left: 0; top: 0; fill: #ff3b3b; pointer-events: none; }
```
